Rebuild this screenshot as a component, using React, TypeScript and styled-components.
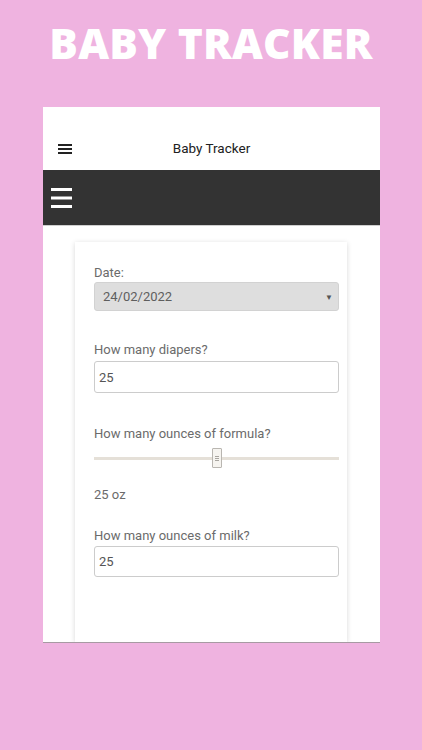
import React, { FC } from 'react'
import styled, { createGlobalStyle } from 'styled-components'

const pink = '#efb3e0'

const GlobalStyle = createGlobalStyle`
    html, body {
        margin: 0;
        padding: 0;
        background: ${pink};
    }
    * { box-sizing: border-box; }
`

interface IGap {
    top?: number
    gap?: number
}

interface IBox {
    height?: number
}

const Page = styled.div`
    width: 422px;
    height: 750px;
    background: ${pink};
    display: flex;
    flex-direction: column;
    overflow: hidden;
`
const Headline = styled.h1`
    margin: 15px 0 0 0;
    height: 56px;
    line-height: 56px;
    text-align: center;
    color: #ffffff;
    font-family: "Open Sans", sans-serif;
    font-weight: 800;
    font-size: 42.5px;
    letter-spacing: 0.2px;
`
const Phone = styled.div`
    margin: 36px 0 0 43px;
    width: 337px;
    height: 536px;
    background: #ffffff;
    border-bottom: 1px solid #a79aa3;
    display: flex;
    flex-direction: column;
    overflow: hidden;
`
const AppBar = styled.div`
    height: 63px;
    display: grid;
    grid-template-columns: 48px 1fr 48px;
    align-items: end;
    padding-bottom: 12px;
`
const MenuButton = styled.div`
    display: flex;
    padding-left: 15px;
    padding-bottom: 4px;
`
const AppTitle = styled.div`
    text-align: center;
    font-family: Roboto, "Liberation Sans", sans-serif;
    font-size: 13.5px;
    color: #212121;
    line-height: 20px;
`
const DarkBar = styled.div`
    height: 56px;
    background: #333333;
    display: flex;
    align-items: center;
    padding-left: 8px;
    border-bottom: 1px solid #cfcfcf;
`
const Content = styled.div`
    flex: 1;
    padding: 16px 33px 0 32px;
    display: flex;
`
const Card = styled.div`
    flex: 1;
    background: #ffffff;
    box-shadow: 0 1px 5px rgba(0, 0, 0, 0.16);
    padding: 22px 8px 0 19px;
    display: flex;
    flex-direction: column;
`
const Field = styled.div<IGap>`
    margin-top: ${props => props.top || 0}px;
    display: flex;
    flex-direction: column;
    gap: ${props => props.gap || 0}px;
`
const Label = styled.label`
    font-family: Roboto, "Liberation Sans", sans-serif;
    font-size: 13px;
    line-height: 17px;
    color: #6b6b6b;
`
const SelectBox = styled.div`
    position: relative;
    height: 29px;
    background: #dedede;
    border: 1px solid #d2d2d2;
    border-radius: 3px;
    padding-left: 8px;
    display: flex;
    align-items: center;
    font-family: Roboto, "Liberation Sans", sans-serif;
    font-size: 13px;
    color: #5e5e5e;
`
const Caret = styled.span`
    position: absolute;
    right: 5px;
    top: 10px;
    font-size: 8px;
    color: #555555;
`
const TextBox = styled.div<IBox>`
    height: ${props => props.height || 32}px;
    border: 1px solid #cccccc;
    border-radius: 3px;
    padding-left: 4px;
    display: flex;
    align-items: center;
    font-family: Roboto, "Liberation Sans", sans-serif;
    font-size: 13px;
    color: #555555;
`
const Slider = styled.div`
    position: relative;
    height: 24px;
    display: flex;
    align-items: center;
`
const Track = styled.div`
    flex: 1;
    height: 3px;
    background: #e5e0d8;
`
const Thumb = styled.div`
    position: absolute;
    top: 2px;
    width: 10px;
    height: 20px;
    margin-left: -5px;
    background: #f6f4f0;
    border: 1px solid #b9b6b1;
    border-radius: 1px;
    display: flex;
    flex-direction: column;
    justify-content: center;
    align-items: center;
    gap: 1px;
`
const Grip = styled.span`
    width: 4px;
    height: 1px;
    background: #a8a5a0;
`
const Value = styled.div`
    margin-top: 16px;
    font-family: Roboto, "Liberation Sans", sans-serif;
    font-size: 13px;
    line-height: 17px;
    color: #6b6b6b;
`

const Hamburger: FC<{ width: number, height: number, stroke: number, color: string }> = ({ width, height, stroke, color }) => (
    <svg width={width} height={height} viewBox={`0 0 ${width} ${height}`}>
        <rect x="0" y="0" width={width} height={stroke} fill={color} />
        <rect x="0" y={(height - stroke) / 2} width={width} height={stroke} fill={color} />
        <rect x="0" y={height - stroke} width={width} height={stroke} fill={color} />
    </svg>
)

const App: FC = () => {
    const formula = 50
    return (
        <Page>
            <GlobalStyle />
            <Headline>BABY TRACKER</Headline>
            <Phone>
                <AppBar>
                    <MenuButton>
                        <Hamburger width={14} height={10} stroke={2} color="#222" />
                    </MenuButton>
                    <AppTitle>Baby Tracker</AppTitle>
                    <div />
                </AppBar>
                <DarkBar>
                    <Hamburger width={21} height={20} stroke={3} color="#fff" />
                </DarkBar>
                <Content>
                    <Card>
                        <Field gap={1}>
                            <Label>Date:</Label>
                            <SelectBox>
                                24/02/2022
                                <Caret>▼</Caret>
                            </SelectBox>
                        </Field>
                        <Field top={30} gap={3}>
                            <Label>How many diapers?</Label>
                            <TextBox height={32}>25</TextBox>
                        </Field>
                        <Field top={32} gap={4}>
                            <Label>How many ounces of formula?</Label>
                            <Slider>
                                <Track />
                                <Thumb style={{ left: `${formula}%` }}>
                                    <Grip />
                                    <Grip />
                                    <Grip />
                                </Thumb>
                            </Slider>
                        </Field>
                        <Value>25 oz</Value>
                        <Field top={24} gap={2}>
                            <Label>How many ounces of milk?</Label>
                            <TextBox height={31}>25</TextBox>
                        </Field>
                    </Card>
                </Content>
            </Phone>
        </Page>
    )
}

export default App
